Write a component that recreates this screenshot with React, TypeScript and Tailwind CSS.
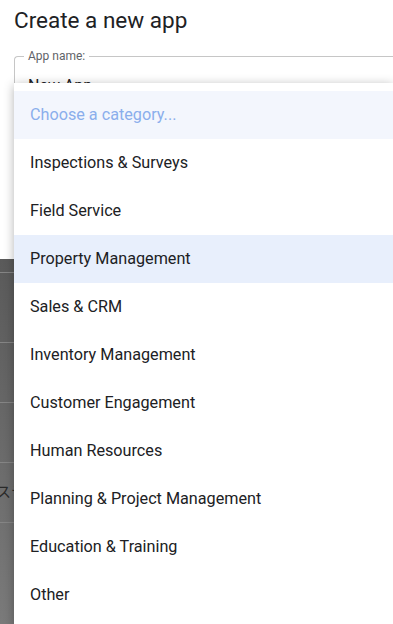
import React from "react";

const items = [
  "Inspections & Surveys",
  "Field Service",
  "Property Management",
  "Sales & CRM",
  "Inventory Management",
  "Customer Engagement",
  "Human Resources",
  "Planning & Project Management",
  "Education & Training",
  "Other",
];

export default function App() {
  return (
    <div
      className="relative w-[393px] h-[624px] overflow-hidden bg-white"
      style={{ fontFamily: "Roboto, 'Noto Sans', 'Noto Sans CJK JP', sans-serif" }}
    >
      <div className="h-[259px] bg-white pl-[14px]">
        <h1 className="pt-[6px] text-[22.5px] leading-[28px] text-[#202124] font-normal">Create a new app</h1>
        <div className="relative mt-[22px] mr-[-20px] h-[60px] rounded-tl-[4px] border-l border-t border-[#c6c6c6]">
          <span className="absolute -top-[9px] left-[9px] bg-white px-[4px] text-[12px] leading-[16px] text-[#5f6368]">
            App name:
          </span>
          <div className="pl-[13px] pt-[19px] text-[16px] leading-[20px] text-[#202124]">New App</div>
        </div>
      </div>
      <div className="h-[365px] bg-gradient-to-b from-[#5a5a5a] to-[#7a7a7a] flex flex-col">
        <div className="h-[14px] border-b border-[#858585]" />
        <div className="h-[70px] border-b border-[#858585]" />
        <div className="h-[60px] border-b border-[#858585]" />
        <div className="h-[60px] border-b border-[#858585]" />
        <div className="h-[60px] border-b border-[#858585] flex items-center">
          <span className="ml-[-4px] text-[15px] text-[#2a2a2a]">ステ</span>
        </div>
        <div className="flex-1" />
      </div>
      <div className="absolute top-[83px] left-[14px] right-0 bg-white py-[8px] shadow-[0_2px_10px_rgba(0,0,0,0.3)]">
        <div className="h-[48px] flex items-center px-[16px] bg-[#f3f6fd] text-[16.2px] text-[#8aaeec]">
          Choose a category...
        </div>
        {items.map((t) => (
          <div
            key={t}
            className={
              "h-[48px] flex items-center px-[16px] text-[16.2px] text-[#202124] " +
              (t === "Property Management" ? "bg-[#e8effc]" : "bg-white")
            }
          >
            {t}
          </div>
        ))}
      </div>
    </div>
  );
}
